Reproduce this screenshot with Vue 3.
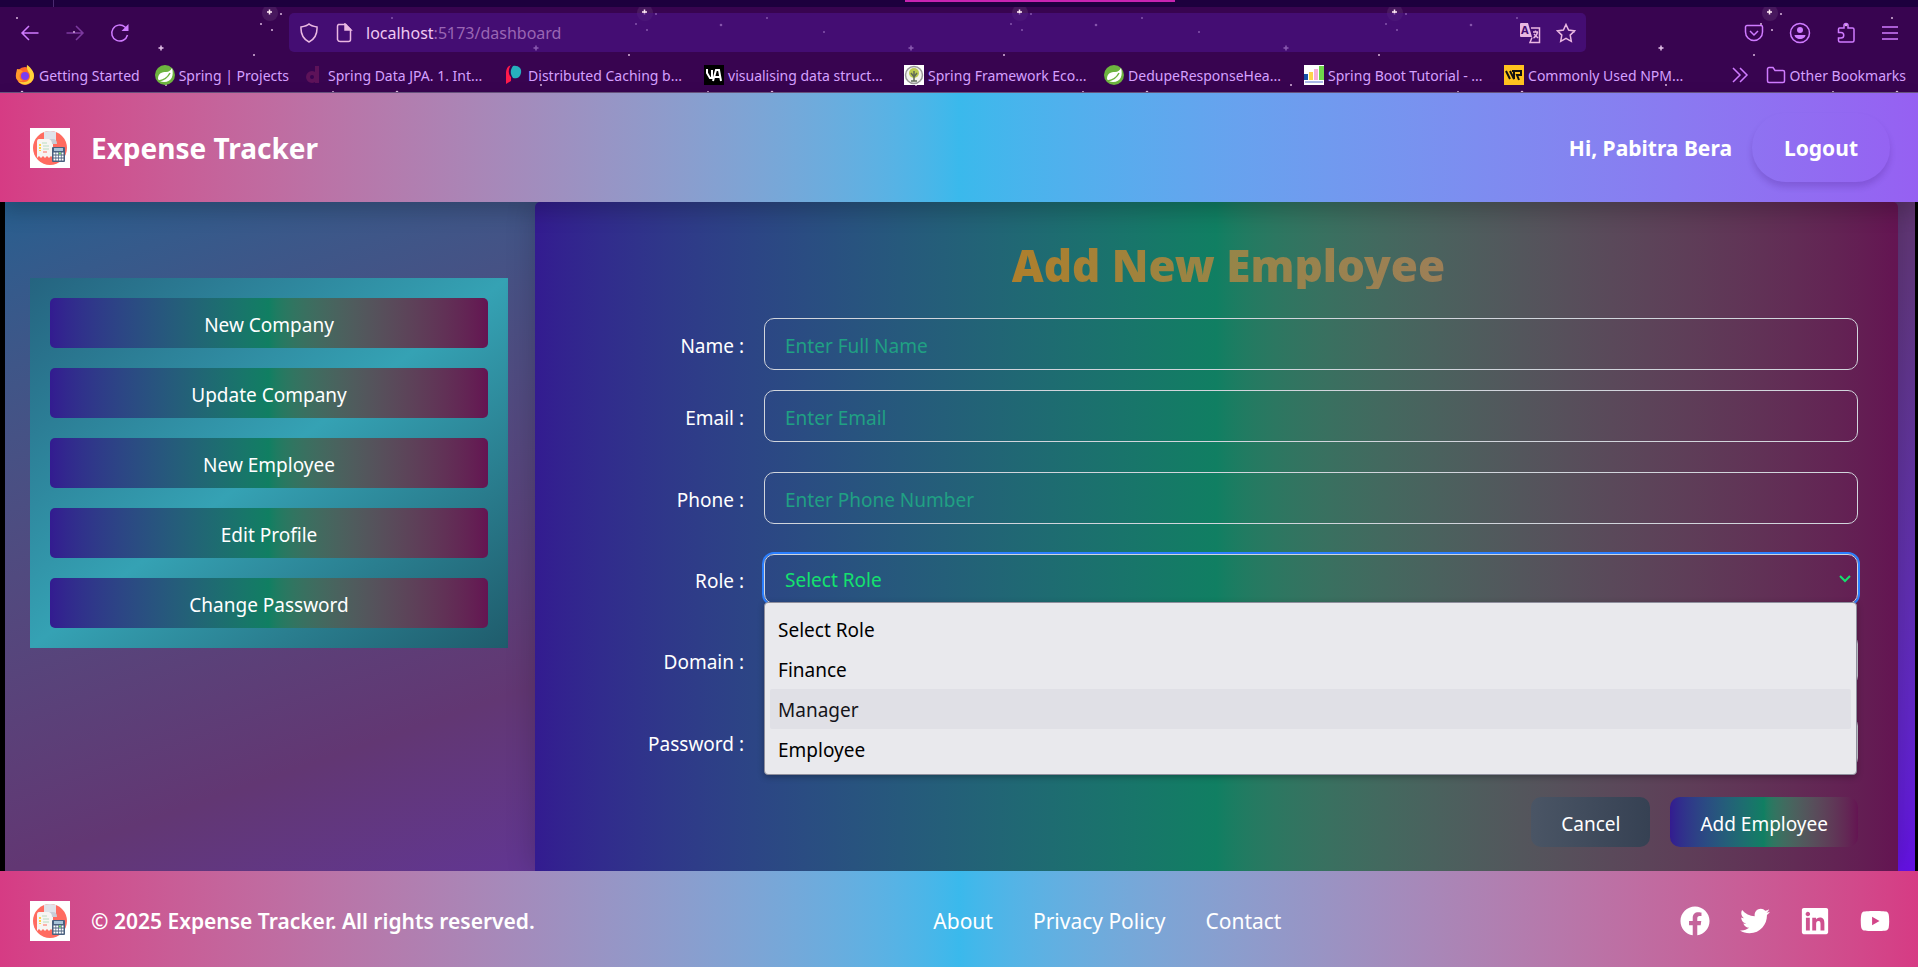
<script setup>
import { ref } from 'vue'

const bookmarks = [
  { icon: 'firefox', label: 'Getting Started', size: 'fit' },
  { icon: 'spring', label: 'Spring | Projects', size: 'fit' },
  { icon: 'medium', label: 'Spring Data JPA. 1. Int...' },
  { icon: 'peer', label: 'Distributed Caching b...' },
  { icon: 'visualgo', label: 'visualising data struct...' },
  { icon: 'tree', label: 'Spring Framework Eco...' },
  { icon: 'spring', label: 'DedupeResponseHea...' },
  { icon: 'chart', label: 'Spring Boot Tutorial - ...' },
  { icon: 'wp', label: 'Commonly Used NPM...' }
]
const menu = ['New Company', 'Update Company', 'New Employee', 'Edit Profile', 'Change Password']
const roles = ['Select Role', 'Finance', 'Manager', 'Employee']
const role = ref('Select Role')
const active = 'Manager'
</script>

<template>
  <div class="screen">
    <div class="chrome">
      <svg class="stars" width="100%" height="100%" aria-hidden="true">
        <defs>
          <pattern id="sky" width="375" height="120" patternUnits="userSpaceOnUse">
            <circle cx="270" cy="13" r="8" fill="#fff" opacity=".08" />
            <path d="M267 12h5M269.500 9.500v5" stroke="#ffe9f5" stroke-width="1.500" />
            <path d="M158.500 48h5M161 45.500v5" stroke="#e5c3ea" stroke-width="1.500" />
            <g fill="#d9b5dc">
              <circle cx="17" cy="18" r="1" /><circle cx="281" cy="14" r="1" />
              <circle cx="261" cy="24" r="1" /><circle cx="272" cy="30" r="1" />
              <circle cx="254" cy="55" r="1" /><circle cx="346" cy="25" r="1.300" />
              <circle cx="74" cy="32" r="1" /><circle cx="166" cy="85" r="1" />
              <circle cx="22" cy="92" r="1.300" /><circle cx="333" cy="92" r="1" />
            </g>
          </pattern>
        </defs>
        <rect width="100%" height="100%" fill="url(#sky)" />
      </svg>
      <div class="tabstrip"><span class="tab-sep"></span><span class="tab-line"></span></div>
      <div class="toolbar">
        <div class="nav">
          <button type="button" aria-label="Back"><svg width="20" height="20" viewBox="0 0 20 20"><path d="M18.500 10H2M9 3L2 10l7 7" /></svg></button>
          <button type="button" aria-label="Forward" class="dim"><svg width="20" height="20" viewBox="0 0 20 20"><path d="M1.500 10H18M11 3l7 7-7 7" /></svg></button>
          <button type="button" aria-label="Reload"><svg width="20" height="20" viewBox="0 0 20 20"><path d="M17.500 12A8 8 0 1 1 15 4l2 2" /><path d="M18.500 1v7h-7z" fill="currentColor" stroke="none" /></svg></button>
        </div>
        <div class="urlbar">
          <svg width="20" height="20" viewBox="0 0 20 20"><path d="M10 1C8 3 5 3.500 2 4c-.4 7 2 12 8 15 6-3 8.400-8 8-15-3-.5-6-1-8-3z" /></svg>
          <svg width="20" height="20" viewBox="0 0 20 20"><path d="M4.500 1.500h7l5 5v10a2 2 0 0 1-2 2h-8a3 3 0 0 1-3-2v-13a2 2 0 0 1 1-2z" /><path d="M11 1v6h6z" fill="currentColor" /></svg>
          <span class="url"><b>localhost</b>:5173/dashboard</span>
          <svg width="22" height="22" viewBox="0 0 22 22"><path d="M2 1h7l4 14H2a1 1 0 0 1-1-1V2a1 1 0 0 1 1-1z" fill="currentColor" stroke="none" /><path d="M12 6h8.500v14.500H11l2-5M14 10h5M16.500 8.500V10M18.500 10c-.5 3-2 5-4 6M15 12l4 4" /><text x="2" y="12" font-size="11" font-weight="700" fill="#450d71" stroke="none">A</text></svg>
          <svg width="20" height="20" viewBox="0 0 20 20"><path d="M10 1.500l2.600 5.600 6 .8-4.400 4.200 1.100 6.200L10 15.300l-5.300 3 1.100-6.200L1.400 7.900l6-.8z" /></svg>
        </div>
        <div class="tools">
          <button type="button" aria-label="Pocket"><svg width="20" height="20" viewBox="0 0 20 20"><path d="M3 2.500h14a1.500 1.500 0 0 1 1.500 1.500v5a8.500 8.500 0 0 1-17 0V4A1.500 1.500 0 0 1 3 2.500zM6 8l4 4 4-4" /></svg></button>
          <button type="button" aria-label="Account"><svg width="22" height="22" viewBox="0 0 22 22"><circle cx="11" cy="11" r="9.500" /><circle cx="11" cy="8" r="3" fill="currentColor" stroke="none" /><path d="M5.500 13h11c0 2-2.500 4-5.500 4s-5.500-2-5.500-4z" fill="currentColor" stroke="none" /></svg></button>
          <button type="button" aria-label="Extensions"><svg width="20" height="22" viewBox="0 0 20 22"><path d="M2.500 9.500V7a1 1 0 0 1 1-1H8V3.500a2 2 0 0 1 4 0V6h4.500A1.500 1.500 0 0 1 18 7.500v11a1.500 1.500 0 0 1-1.500 1.500H4a1.500 1.500 0 0 1-1.500-1.500V16H5a2 2 0 0 0 0-5.500H2.500z" /></svg></button>
          <button type="button" aria-label="Menu"><svg width="18" height="18" viewBox="0 0 18 18"><path d="M1 3h16M1 9h16M1 15h16" /></svg></button>
        </div>
      </div>
      <div class="bookmarks">
        <a v-for="b in bookmarks" :key="b.label" href="#" class="bm" :class="b.size">
          <svg width="20" height="20" viewBox="0 0 20 20">
            <template v-if="b.icon === 'firefox'">
              <circle cx="10" cy="11" r="9" fill="#ff6a2b" />
              <path d="M12 0c3 2 7 6 7 11a9 9 0 0 1-16 5c7 3 12 0 12-5 0-4-4-5-3-11z" fill="#ffd23a" />
              <path d="M2 4c2 0 5 1 6 3-4 0-5 7 0 9-5 1-8-2-7-7z" fill="#ff9a2b" />
              <circle cx="10" cy="11" r="4" fill="#7a3df0" />
            </template>
            <template v-else-if="b.icon === 'spring'">
              <circle cx="10" cy="10" r="10" fill="#6db33f" />
              <path d="M17 3c2 7 0 14-8 14-3 0-5-1-6-3 0-6 4-7 8-7 3 0 5-2 6-4z" fill="#fff" />
              <path d="M4 16c5-1 9-4 11-8" fill="none" stroke="#6db33f" />
            </template>
            <g v-else-if="b.icon === 'medium'" fill="none" stroke="#5d1259" stroke-width="4">
              <circle cx="8" cy="12" r="4" />
              <line x1="13" y1="1" x2="13" y2="18" />
            </g>
            <template v-else-if="b.icon === 'peer'">
              <path d="M7 0C2 2 2 6 2 10v9l5-3V12C4 9 4 4 7 0z" fill="#ff1a4b" />
              <path d="M9 1c5-1 9 2 8 7s-5 6-8 5C6 9 6 5 9 1z" fill="#26b0bd" />
            </template>
            <template v-else-if="b.icon === 'visualgo'">
              <rect width="20" height="20" fill="#000" />
              <path d="M3 4v4l3 5h2V5M9 16l3-11h3l2 11M11 12h5" fill="none" stroke="#fff" stroke-width="2" />
            </template>
            <template v-else-if="b.icon === 'tree'">
              <rect width="20" height="20" fill="#fff" />
              <circle cx="10" cy="10" r="8.500" fill="#f2f2ee" stroke="#999" />
              <circle cx="10" cy="8" r="5" fill="#bccb52" />
              <path d="M10 6v10M7 8l3 4 3-4M7 16h6" fill="none" stroke="#5f6b58" />
            </template>
            <template v-else-if="b.icon === 'chart'">
              <rect width="20" height="20" fill="#fff" />
              <path d="M0 9h4v6H0z" fill="#1450a8" /><path d="M5 7h4v8H5z" fill="#ffd54a" />
              <path d="M10 4h4v11h-4z" fill="#f9aed8" /><path d="M15 1h5v14h-5z" fill="#6fd64b" />
              <path d="M1 17h18" stroke="#8c9fe0" />
            </template>
            <template v-else>
              <rect width="20" height="20" fill="#ffc21f" />
              <path d="M2 6l4 8M6 6l4 8V6M8 6h9v4h-4l2 5" fill="none" stroke="#111" stroke-width="2" />
            </template>
          </svg>
          <span>{{ b.label }}</span>
        </a>
        <div class="bm-end">
          <svg width="20" height="20" viewBox="0 0 20 20"><path d="M3 3l7 7-7 7M10 3l7 7-7 7" /></svg>
          <a href="#" class="bm other">
            <svg width="20" height="20" viewBox="0 0 20 20"><path d="M1.500 4A1.500 1.500 0 0 1 3 2.500h4l2 3h8A1.500 1.500 0 0 1 18.500 7v9a1.500 1.500 0 0 1-1.500 1.500H3A1.500 1.500 0 0 1 1.500 16z" /></svg>
            <span>Other Bookmarks</span>
          </a>
        </div>
      </div>
    </div>

    <header class="header">
      <div class="brand">
        <svg class="logo" width="40" height="40" viewBox="0 0 40 40"><use href="#expense-logo" /></svg>
        <h1>Expense Tracker</h1>
      </div>
      <div class="user">
        <span>Hi, Pabitra Bera</span>
        <button type="button" class="logout">Logout</button>
      </div>
    </header>

    <main class="main">
      <aside class="side">
        <nav class="menu">
          <button v-for="m in menu" :key="m" type="button">{{ m }}</button>
        </nav>
      </aside>
      <form class="form" @submit.prevent>
        <div class="heading"><h2>Add New Employee</h2></div>
        <div class="row first"><label for="name">Name :</label><input id="name" type="text" placeholder="Enter Full Name" /></div>
        <div class="row"><label for="email">Email :</label><input id="email" type="email" placeholder="Enter Email" /></div>
        <div class="row"><label for="phone">Phone :</label><input id="phone" type="tel" placeholder="Enter Phone Number" /></div>
        <div class="row">
          <label for="role">Role :</label>
          <div class="select">
            <select id="role" v-model="role"><option v-for="r in roles" :key="r">{{ r }}</option></select>
            <svg class="caret" width="12" height="12" viewBox="0 0 12 12"><path d="M1 3l5 5 5-5" /></svg>
            <ul class="list" role="listbox" aria-label="Role">
              <li v-for="r in roles" :key="r" role="option" :class="{ active: r === active }">{{ r }}</li>
            </ul>
          </div>
        </div>
        <div class="row"><label for="domain">Domain :</label><input id="domain" type="text" /></div>
        <div class="row"><label for="password">Password :</label><input id="password" type="password" /></div>
        <div class="actions">
          <button type="button" class="cancel">Cancel</button>
          <button type="submit" class="add">Add Employee</button>
        </div>
      </form>
    </main>

    <footer class="footer">
      <div class="brand">
        <svg class="logo" width="40" height="40" viewBox="0 0 40 40">
          <g id="expense-logo">
            <rect width="40" height="40" fill="#fff" />
            <circle cx="20" cy="20" r="17" fill="#ff6b60" />
            <path d="M14 4q6-2 12 0v12H14z" fill="#e0e3ea" />
            <path d="M10 11h13v19l-2-2-2 2-2-2-2 2-2-2-2 2-2-2-2 2V14q0-3 2-3z" fill="#f7f5f3" />
            <path d="M10 11h13q4 0 4 5h-5q0-4-3-5z" fill="#c9cdd6" />
            <path d="M10 16v7" stroke="#ffd24a" stroke-width="2" stroke-dasharray="2 1" />
            <path d="M12 15h5M13 18h6M13 21h6" stroke="#b9dcc0" />
            <path d="M13 24h4" stroke="#ff6b60" />
            <rect x="22" y="19" width="13" height="15" rx="1" fill="#4a607f" />
            <path d="M24 20h9v3h-9z" fill="#a7c3d8" />
            <path d="M23.500 25.500h10M23.500 28.500h10M23.500 31.500h10" stroke="#fff" stroke-width="2" stroke-dasharray="2 .7" />
            <path d="M28.900 25.500h2" stroke="#63c25a" stroke-width="2" />
          </g>
        </svg>
        <span class="copy">© 2025 Expense Tracker. All rights reserved.</span>
      </div>
      <nav class="links"><a href="#">About</a><a href="#">Privacy Policy</a><a href="#">Contact</a></nav>
      <div class="social">
        <a href="#" aria-label="Facebook"><svg width="30" height="30" viewBox="0 0 512 512"><path d="M504 256C504 119 393 8 256 8S8 119 8 256c0 123.780 90.690 226.380 209.250 245V327.690h-63V256h63v-54.640c0-62.150 37-96.480 93.670-96.480 27.140 0 55.520 4.840 55.520 4.840v61h-31.280c-30.800 0-40.410 19.120-40.410 38.730V256h68.780l-11 71.690h-57.780V501C413.310 482.380 504 379.780 504 256z" /></svg></a>
        <a href="#" aria-label="Twitter"><svg width="30" height="30" viewBox="0 0 512 512"><path d="M459.370 151.716c.325 4.548.325 9.097.325 13.645 0 138.720-105.583 298.558-298.558 298.558-59.452 0-114.680-17.219-161.137-47.106 8.447.974 16.568 1.299 25.340 1.299 49.055 0 94.213-16.568 130.274-44.832-46.132-.975-84.792-31.188-98.112-72.772 6.498.974 12.995 1.624 19.818 1.624 9.421 0 18.843-1.300 27.614-3.573-48.081-9.747-84.143-51.980-84.143-102.985v-1.299c13.969 7.797 30.214 12.670 47.431 13.319-28.264-18.843-46.781-51.005-46.781-87.391 0-19.492 5.197-37.360 14.294-52.954 51.655 63.675 129.300 105.258 216.365 109.807-1.624-7.797-2.599-15.918-2.599-24.040 0-57.828 46.782-104.934 104.934-104.934 30.213 0 57.502 12.670 76.670 33.137 23.715-4.548 46.456-13.320 66.599-25.340-7.798 24.366-24.366 44.833-46.132 57.827 21.117-2.273 41.584-8.122 60.426-16.243-14.292 20.791-32.161 39.308-52.628 54.253z" /></svg></a>
        <a href="#" aria-label="LinkedIn"><svg width="30" height="30" viewBox="-32 0 512 512"><path d="M416 32H31.900C14.300 32 0 46.500 0 64.300v383.400C0 465.500 14.300 480 31.900 480H416c17.600 0 32-14.500 32-32.300V64.300c0-17.800-14.400-32.300-32-32.300zM135.400 416H69V202.200h66.500V416zm-33.200-243c-21.300 0-38.500-17.300-38.500-38.500S80.900 96 102.200 96c21.200 0 38.500 17.300 38.500 38.500 0 21.300-17.200 38.500-38.500 38.500zm282.100 243h-66.400V312c0-24.800-.5-56.700-34.500-56.700-34.600 0-39.900 27-39.900 54.900V416h-66.400V202.200h63.700v29.200h.9c8.900-16.800 30.600-34.500 62.900-34.500 67.200 0 79.700 44.300 79.700 101.900V416z" /></svg></a>
        <a href="#" aria-label="YouTube"><svg width="30" height="30" viewBox="0 -32 576 576"><path d="M549.655 124.083c-6.281-23.650-24.787-42.276-48.284-48.597C458.781 64 288 64 288 64S117.220 64 74.629 75.486c-23.497 6.322-42.003 24.947-48.284 48.597-11.412 42.867-11.412 132.305-11.412 132.305s0 89.438 11.412 132.305c6.281 23.650 24.787 41.500 48.284 47.821C117.220 448 288 448 288 448s170.780 0 213.371-11.486c23.497-6.321 42.003-24.171 48.284-47.821 11.412-42.867 11.412-132.305 11.412-132.305s0-89.438-11.412-132.305zm-317.510 213.508V175.185l142.739 81.205-142.739 81.201z" /></svg></a>
      </div>
    </footer>
  </div>
</template>

<style>
body { margin: 0; background: #000; }
</style>

<style scoped>
.screen {
  --rainbow: linear-gradient(to right in oklab, #331b90, #107f62, #641452);
  min-height: 100vh;
  display: flex;
  flex-direction: column;
  overflow: hidden;
  font-family: "Noto Sans", "Open Sans", sans-serif;
  font-size: 19px;
  color: #fff;
}
* { box-sizing: border-box; }
button, input, select { font: inherit; color: inherit; }
button { border: 0; background: none; padding: 0; cursor: pointer; }
a { color: inherit; text-decoration: none; }
h1, h2, ul { margin: 0; padding: 0; }
svg { display: block; flex: none; }

.chrome { position: relative; background: #380450; border-bottom: 1px solid #6a5580; color: #cf7bff; }
.chrome svg { fill: none; stroke: currentColor; stroke-width: 1.5; }
.chrome .stars, .chrome .bm svg { stroke: none; }
.chrome .stars { position: absolute; inset: 0; }
.chrome .other svg { stroke: #cf7bff; }
.tabstrip { height: 7px; background: #1d003e; display: flex; position: relative; }
.tab-sep { width: 54px; border-right: 1px solid #4a2a70; }
.tab-line { height: 2px; width: 270px; margin-left: 851px; background: #c724b1; }
.toolbar { position: relative; display: flex; align-items: center; height: 51px; padding: 0 19px; }
.nav { display: flex; gap: 25px; width: 270px; padding-left: 1px; }
.dim { opacity: .45; }
.urlbar { flex: 1; margin-right: 158px; height: 39px; border-radius: 5px; background: rgba(77, 20, 139, .6); display: flex; align-items: center; gap: 15px; padding: 0 10px; color: #eab8e2; }
.url { flex: 1; font-size: 16px; color: #9a66b4; margin-left: -3px; }
.url b { font-weight: 400; color: #f0c8f2; }
.tools { display: flex; align-items: center; gap: 25px; }
.bookmarks { position: relative; display: flex; align-items: center; height: 34px; padding-left: 15px; padding-right: 12px; font-size: 14px; color: #d5a0ff; }
.bm { display: flex; align-items: center; gap: 4px; width: 200px; white-space: nowrap; }
.bm.fit { width: auto; padding-right: 15px; }
.bm-end { margin-left: auto; display: flex; align-items: center; gap: 16px; color: #cf7bff; }
.bm.other { width: auto; color: #d5a0ff; }

.header {
  position: relative;
  z-index: 1;
  display: flex;
  align-items: center;
  justify-content: space-between;
  padding: 20px 28px 20px 30px;
  background: linear-gradient(to right in oklab, #d63b84, #3ab9ec, #9660f2);
  box-shadow: 0 10px 20px rgba(0, 0, 0, .2);
}
.brand { display: flex; align-items: center; gap: 21px; }
h1 { font-size: 28px; line-height: 40px; font-weight: 700; }
.user { display: flex; align-items: center; gap: 20px; font-size: 21px; font-weight: 700; }
.logout { height: 69px; padding: 0 32px; border-radius: 34px; box-shadow: 0 5px 6px rgba(60, 20, 120, .2); }

.main { flex: 1; display: flex; margin: 0 3px 0 5px; padding-right: 17px; background: linear-gradient(to bottom right in oklab, #275f8f, #623773, #6510e6); }
.side { width: 28%; padding: 76px 27px 0 25px; }
.menu { display: flex; flex-direction: column; gap: 20px; padding: 20px; background: linear-gradient(to bottom right in oklab, #256480, #35a2b4, #1f5c6c); }
.menu button { height: 50px; padding-top: 4px; border-radius: 5px; background: var(--rainbow); }
.form { flex: 1; padding: 39px 40px 24px; border-radius: 5px 5px 0 0; background: var(--rainbow); box-shadow: 0 0 30px rgba(0, 0, 0, .2); }
.heading { display: flex; justify-content: center; padding-left: 24px; }
h2 { font-size: 44px; line-height: 48px; font-weight: 900; color: transparent; background: linear-gradient(to right, #ae7f2c, #968548 50%, #9d7f57); background-clip: text; -webkit-background-clip: text; }
.row { display: flex; align-items: center; gap: 20px; margin-top: 30px; }
.row.first { margin-top: 29px; }
.row.first + .row { margin-top: 20px; }
label { width: 169px; padding-top: 3px; text-align: right; }
input { flex: 1; min-width: 0; height: 52px; padding: 4px 20px 0; border: 1px solid #d1d5dc; border-radius: 10px; background: none; }
input::placeholder { color: #20a083; opacity: 1; }
.select { position: relative; flex: 1; }
select { display: block; width: 100%; height: 50px; padding: 2px 20px 0; appearance: none; border: 1px solid #d1d5dc; border-radius: 10px; background: none; color: #14e26e; outline: 0; box-shadow: 0 0 0 2px #2b7fff; }
option { color: #000; }
.caret { position: absolute; right: 7px; top: 19px; fill: none; stroke: #14e26e; stroke-width: 2; }
.list { position: absolute; z-index: 2; top: 48px; left: 0; right: 1px; padding: 6px 5px 5px; list-style: none; background: #e9e9ed; border: 1px solid #8f8f9d; border-radius: 4px; color: #000; box-shadow: 0 2px 6px rgba(0, 0, 0, .3); }
.list li { height: 40px; line-height: 42px; padding: 0 8px; border-radius: 2px; }
.list .active { background: #e0e0e6; color: #15141a; }
.actions { display: flex; justify-content: flex-end; gap: 20px; margin-top: 29px; }
.actions button { height: 50px; padding: 4px 30px 0; border-radius: 10px; }
.cancel { background: linear-gradient(to right, #4a5565, #364153); }
.add { background: var(--rainbow); }

.footer { position: relative; display: flex; align-items: center; justify-content: space-between; padding: 30px 28px 26px 30px; font-size: 21px; background: linear-gradient(to right in oklab, #d63b84, #3ab9ec, #d63b84); }
.copy { font-weight: 600; line-height: 40px; }
.links { display: flex; gap: 40px; }
.social { display: flex; gap: 30px; fill: #fff; }
</style>
